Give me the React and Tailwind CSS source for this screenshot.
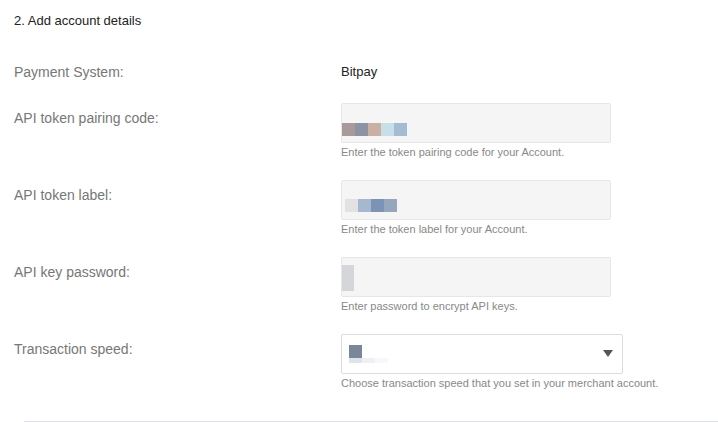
export default function App() {
  const label = "w-[327px] shrink-0 pt-[7px] text-[14px] leading-[16px] text-[#777]";
  const help = "mt-[2px] text-[11px] leading-[14px] text-[#888]";
  const input = "w-[270px] h-[40px] bg-[#f5f5f5] border border-[#e6e6e6] rounded-[2px] box-border";
  return (
    <div className="w-[718px] h-[422px] bg-white overflow-hidden font-['Liberation_Sans',Arial,sans-serif]">
      <div className="pt-[13px] pl-[14px] text-[13px] leading-[16px] text-[#222]">2. Add account details</div>

      <div className="mt-[35px] pl-[14px] flex">
        <div className="w-[327px] shrink-0 text-[14px] leading-[16px] text-[#777]">Payment System:</div>
        <div className="text-[13px] leading-[16px] text-[#222]">Bitpay</div>
      </div>

      <div className="mt-[23px] pl-[14px] flex flex-col gap-[21px]">
        <div className="flex">
          <div className={label}>API token pairing code:</div>
          <div>
            <div className={input + " pt-[19px]"}>
              <div className="flex h-[13px]">
                <div className="w-[13px] bg-[#a89a9a]" />
                <div className="w-[13px] bg-[#8e93a3]" />
                <div className="w-[13px] bg-[#c8b0a3]" />
                <div className="w-[13px] bg-[#c8dfe9]" />
                <div className="w-[13px] bg-[#a4bcd3]" />
              </div>
            </div>
            <div className={help}>Enter the token pairing code for your Account.</div>
          </div>
        </div>

        <div className="flex">
          <div className={label}>API token label:</div>
          <div>
            <div className={input + " pt-[18px] pl-[3px]"}>
              <div className="flex h-[13px]">
                <div className="w-[13px] bg-[#e2e2e2]" />
                <div className="w-[13px] bg-[#a5b8cf]" />
                <div className="w-[13px] bg-[#7b93b5]" />
                <div className="w-[13px] bg-[#96a7bd]" />
              </div>
            </div>
            <div className={help}>Enter the token label for your Account.</div>
          </div>
        </div>

        <div className="flex">
          <div className={label}>API key password:</div>
          <div>
            <div className={input + " pt-[7px]"}>
              <div className="w-[12px] h-[26px] bg-[#d4d6da]" />
            </div>
            <div className={help}>Enter password to encrypt API keys.</div>
          </div>
        </div>

        <div className="flex">
          <div className={label}>Transaction speed:</div>
          <div>
            <div className="w-[282px] h-[40px] bg-white border border-[#dcdcdc] rounded-[2px] box-border flex items-start justify-between pl-[7px] pr-[9px]">
              <div className="pt-[10px]">
                <div className="w-[13px] h-[13px] bg-[#7a8799]" />
                <div className="flex h-[5px]">
                  <div className="w-[13px] bg-[#dfe3ea]" />
                  <div className="w-[13px] bg-[#eef0f4]" />
                  <div className="w-[13px] bg-[#f7f8fa]" />
                </div>
              </div>
              <svg className="mt-[15px]" width="10" height="7" viewBox="0 0 10 7">
                <polygon points="0,0 10,0 5,7" fill="#555" />
              </svg>
            </div>
            <div className={help}>Choose transaction speed that you set in your merchant account.</div>
          </div>
        </div>
      </div>

      <div className="mt-[31px] ml-[24px] h-px bg-[#dfe0e8]" />
    </div>
  );
}
